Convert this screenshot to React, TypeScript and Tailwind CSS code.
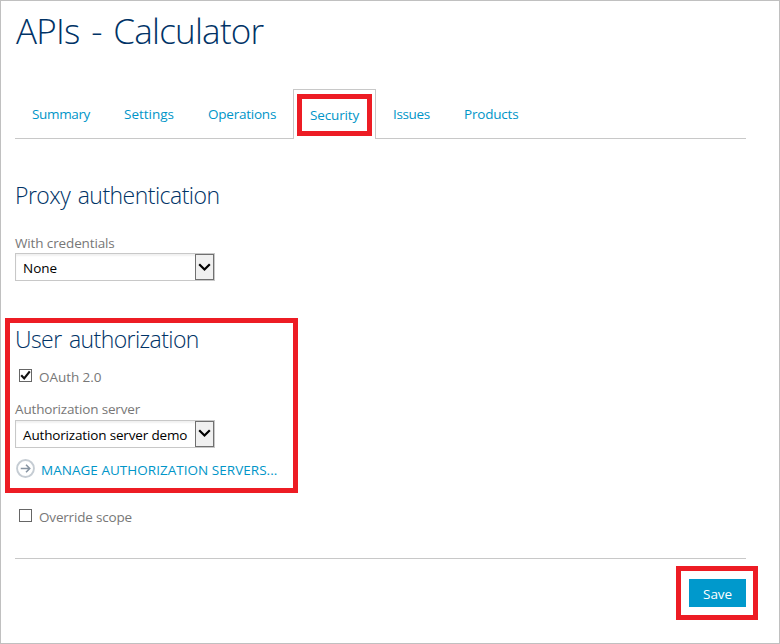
import React from 'react';

const tabs = [
  { label: 'Summary', box: 'w-[92px]', text: 'tracking-[-0.35px]' },
  { label: 'Settings', box: 'w-[84px]', text: 'tracking-[-0.02px]' },
  { label: 'Operations', box: 'w-[102px]', text: 'tracking-[-0.23px]' },
  { label: 'Security', box: 'w-[83px]', text: 'tracking-[-0.15px]', active: true },
  { label: 'Issues', box: 'w-[71px]', text: 'tracking-[-0.35px]' },
  { label: 'Products', box: 'w-[88px]', text: 'tracking-[-0.2px]' },
];

function Select({ value, className, chevron }: { value: string; className: string; chevron: string }) {
  return (
    <div className="flex h-7 w-[200px] border border-[#c8c8c8] bg-white shadow-[inset_0_2px_2px_#f1f1f1]">
      <span className={`w-[179px] pl-[7px] leading-[28px] whitespace-nowrap text-black ${className}`}>{value}</span>
      <span className="flex h-[26px] w-[19px] items-start justify-center border border-[#707070] bg-[#f0f0f0]">
        <svg className={`h-[9px] w-[13px] ${chevron}`} viewBox="0 0 13 9" fill="none" stroke="#000" strokeWidth="2.2">
          <path d="M1.2 1.2L6.5 6.5L11.8 1.2" />
        </svg>
      </span>
    </div>
  );
}

function Checkbox({ label, checked, className }: { label: string; checked?: boolean; className: string }) {
  return (
    <div className="flex h-5 items-center pl-1">
      <span className="mb-[3px] h-[13px] w-[13px] border border-[#666] bg-white">
        {checked && (
          <svg className="h-[11px] w-[11px]" viewBox="0 0 11 11" fill="none" stroke="#111" strokeWidth="2.2">
            <path d="M1.2 5.3L4.2 8.4L9.8 1.4" />
          </svg>
        )}
      </span>
      <span className={`ml-[7px] whitespace-nowrap ${className}`}>{label}</span>
    </div>
  );
}

export default function App() {
  return (
    <div className="relative h-[644px] w-[780px] overflow-hidden border border-[#c0c0c0] bg-white pl-[14px] font-['Open_Sans','Noto_Sans',sans-serif] text-[13.5px] leading-5 text-[#777]">
      <h1 className="mt-[5px] ml-px h-[49px] text-[35px] leading-[50px] font-light tracking-[-0.75px] [word-spacing:3.2px] whitespace-nowrap text-[#003366]">
        APIs - Calculator
      </h1>
      <nav className="mt-[34px] flex h-[50px] w-[731px] border-b border-[#c8c8c8] text-[#0095c8]">
        {tabs.map((t) => (
          <a
            key={t.label}
            className={`h-[50px] shrink-0 border border-b-0 pl-4 whitespace-nowrap ${t.box} ${t.text} ${
              t.active ? 'border-[#c8c8c8] bg-white pt-[15px]' : 'border-transparent pt-[14px]'
            }`}
          >
            {t.label}
          </a>
        ))}
      </nav>
      <h2 className="mt-[40px] h-[33px] text-[23px] leading-8 font-light tracking-[-0.53px] [word-spacing:2px] whitespace-nowrap text-[#003366]">
        Proxy authentication
      </h2>
      <div className="mt-[21px] h-5 tracking-[-0.13px]">With credentials</div>
      <Select value="None" className="" chevron="mt-2" />
      <h2 className="mt-[42px] h-[33px] text-[23px] leading-8 font-light tracking-[-0.58px] [word-spacing:2px] whitespace-nowrap text-[#003366]">
        User authorization
      </h2>
      <div className="mt-[11px]">
        <Checkbox label="OAuth 2.0" checked className="tracking-[-0.05px]" />
      </div>
      <div className="mt-3 h-[21px] tracking-[-0.16px]">Authorization server</div>
      <Select value="Authorization server demo" className="tracking-[-0.16px]" chevron="mt-[7px]" />
      <a className="mt-3 flex h-5 items-center text-[#0095c8]">
        <svg className="ml-[1px] mb-[3px] h-[19px] w-[19px]" viewBox="0 0 18 18" fill="none">
          <circle cx="9" cy="9" r="8" stroke="#c5ccd3" strokeWidth="1.8" />
          <path d="M4.5 9H13M9.5 5.5L13 9L9.5 12.5" stroke="#8794a2" strokeWidth="1.5" />
        </svg>
        <span className="ml-[6px] tracking-[0.03px] whitespace-nowrap">MANAGE AUTHORIZATION SERVERS...</span>
      </a>
      <div className="mt-[27px]">
        <Checkbox label="Override scope" className="tracking-[-0.18px]" />
      </div>
      <div className="mt-[31px] flex w-[731px] justify-end border-t border-[#c8c8c8] pt-5">
        <button className="h-7 w-[57px] bg-[#0099cc] pt-[2px] leading-[26px] tracking-[-0.1px] text-white">Save</button>
      </div>
      <div className="absolute top-[93px] left-[296px] h-[42px] w-[75px] border-5 border-[#ed1c24]" />
      <div className="absolute top-[317px] left-[4px] h-[175px] w-[293px] border-5 border-[#ed1c24]" />
      <div className="absolute top-[565px] left-[675px] h-[54px] w-[82px] border-5 border-[#ed1c24]" />
    </div>
  );
}
